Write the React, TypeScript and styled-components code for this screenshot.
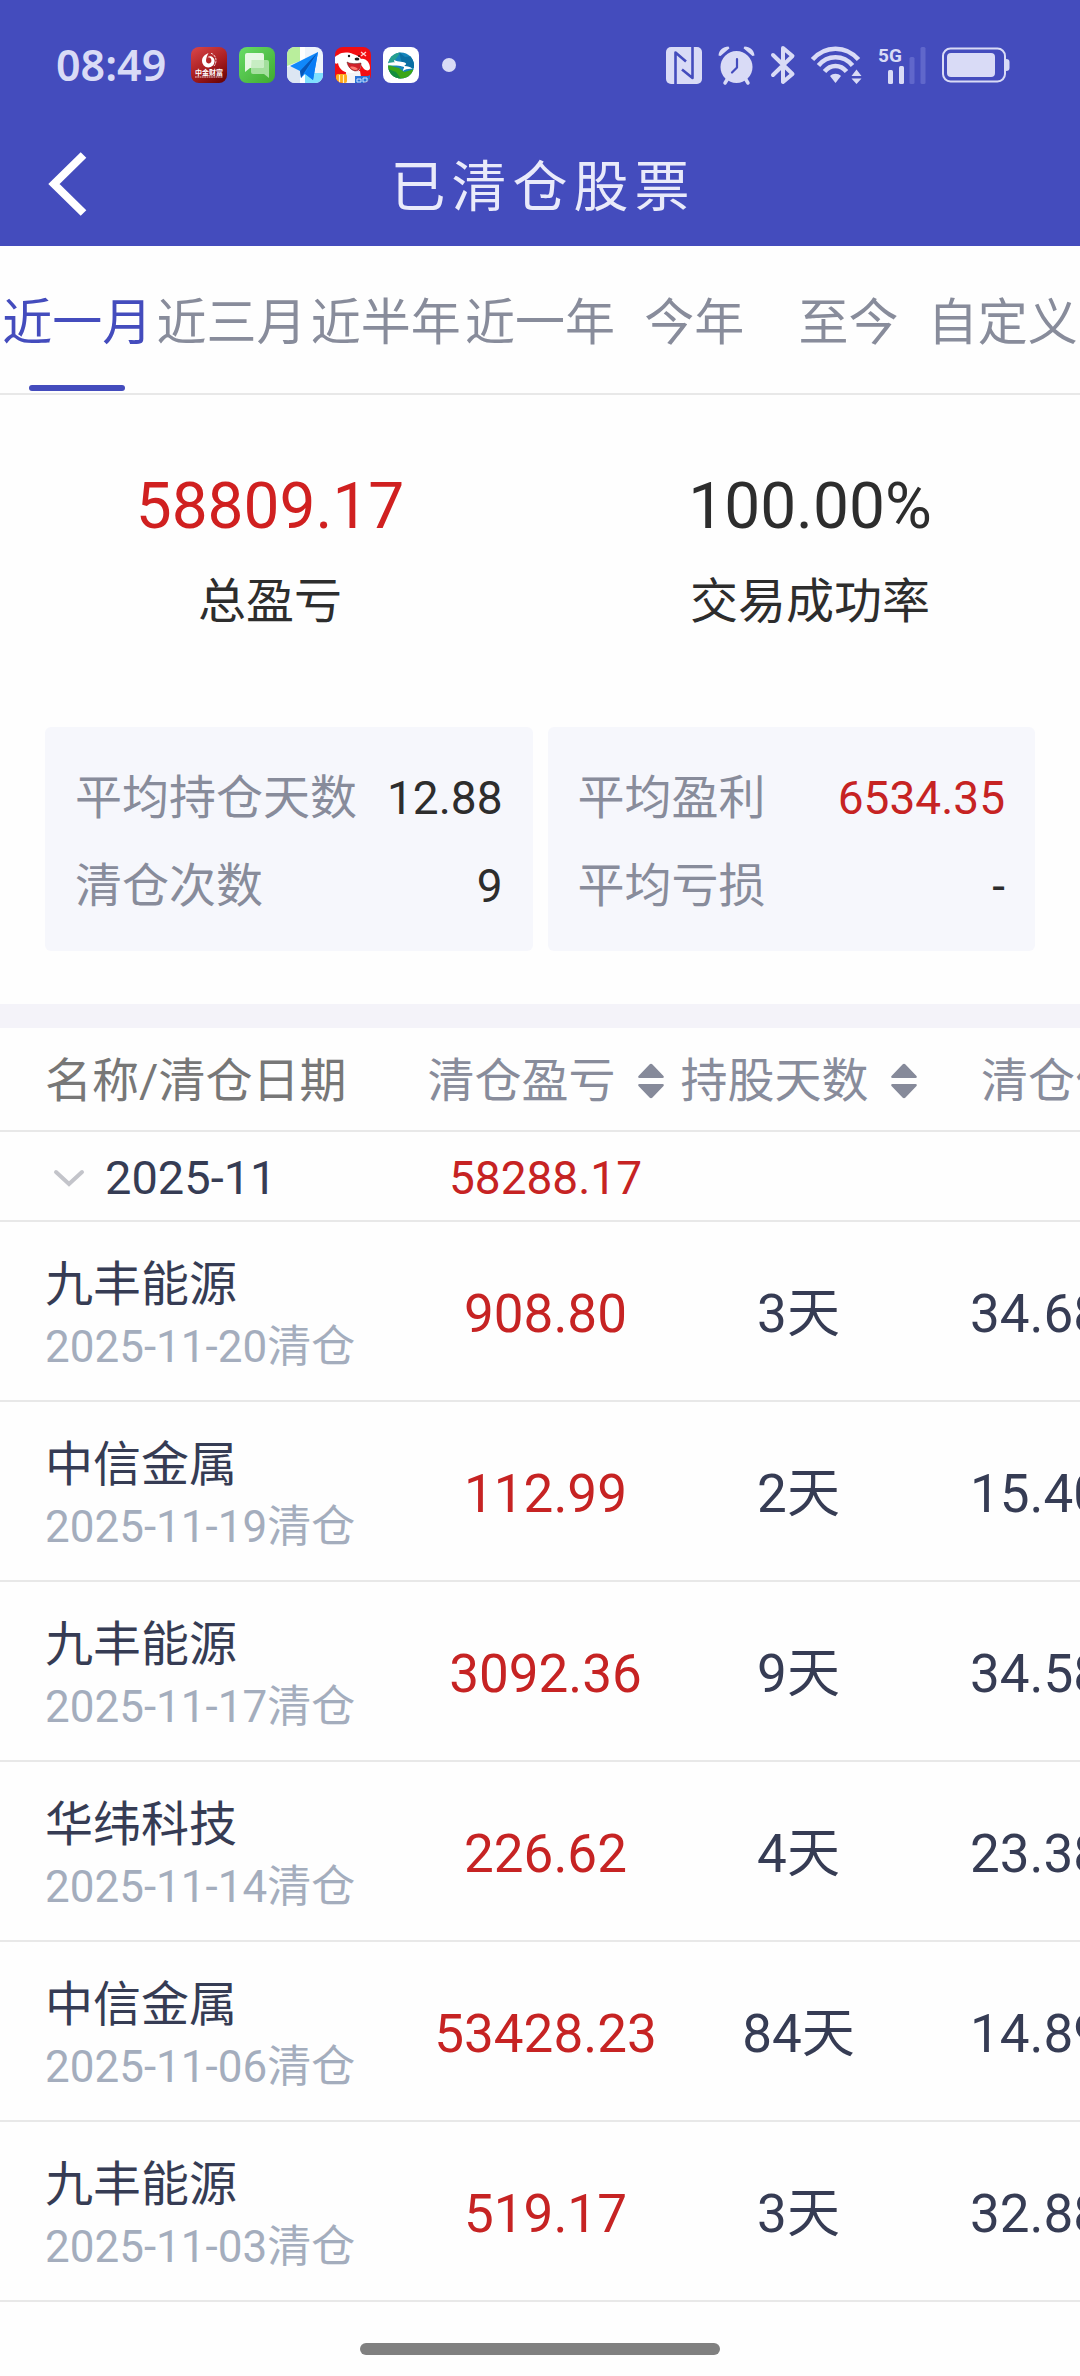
import React, { useState } from 'react';
import styled, { createGlobalStyle } from 'styled-components';

const color = {
  brand: '#444cbd',
  statusInk: '#d9dbf6',
  titleInk: '#e9eafa',
  muted: '#888c9b',
  heading: '#777777',
  ink: '#2d2d2d',
  navy: '#363c54',
  date: '#a4adbd',
  gain: '#c62323',
  gainBright: '#d02020',
  line: '#e8e8e8',
  card: '#f6f7fc',
  band: '#f4f3f9',
};

const GlobalStyle = createGlobalStyle`
  * { box-sizing: border-box; }
  html, body { margin: 0; background: #fefefe; }
  body, button {
    font-family: Roboto, "Noto Sans CJK SC", sans-serif;
    font-weight: 400;
  }
  button {
    margin: 0;
    padding: 0;
    border: 0;
    background: none;
    color: inherit;
    font-size: inherit;
    line-height: inherit;
    cursor: pointer;
  }
`;

const Page = styled.div`
  display: flex;
  flex-direction: column;
  min-height: 100vh;
`;

const TopArea = styled.header`
  background: ${color.brand};
`;

const StatusBar = styled.div`
  display: flex;
  align-items: center;
  justify-content: space-between;
  height: 122px;
  padding: 8px 70px 0 56px;
  color: ${color.statusInk};

  svg { overflow: visible; }
`;

const StatusGroup = styled.div<{ $gap: number }>`
  display: flex;
  align-items: center;
  gap: ${(p) => p.$gap}px;
`;

const Clock = styled.span`
  width: 123px;
  font-family: "Noto Sans", sans-serif;
  font-size: 43px;
  line-height: 44px;
  font-weight: 600;
`;

const Dot = styled.span`
  width: 14px;
  height: 14px;
  margin-left: 11px;
  border-radius: 50%;
  background: currentColor;
`;

const NavBar = styled.div`
  display: grid;
  grid-template-columns: 120px 1fr 120px;
  align-items: center;
  height: 124px;
`;

const BackButton = styled.button`
  display: flex;
  align-items: center;
  height: 100%;
  padding-left: 48px;
`;

const Title = styled.h1`
  margin: 0;
  padding: 6px 0 0 6px;
  color: ${color.titleInk};
  font-size: 55px;
  line-height: 72px;
  font-weight: 400;
  letter-spacing: 6px;
  text-align: center;
`;

const Tabs = styled.nav`
  display: flex;
  border-bottom: 2px solid ${color.line};
`;

const Tab = styled.button<{ $active: boolean }>`
  display: flex;
  flex: 1 1 0;
  flex-direction: column;
  align-items: center;
  gap: 32px;
  padding: 47px 0 2px;
  color: ${(p) => (p.$active ? color.brand : color.muted)};
  font-size: 50px;
  line-height: 60px;
  white-space: nowrap;

  &::after {
    content: "";
    width: 96px;
    height: 6px;
    border-radius: 3px;
    background: ${(p) => (p.$active ? color.brand : 'transparent')};
  }
`;

const Summary = styled.section`
  padding: 74px 45px 53px;
`;

const Totals = styled.div`
  display: grid;
  grid-template-columns: 1fr 1fr;
  margin: 0 -45px 91px;
`;

const Total = styled.div`
  display: flex;
  flex-direction: column;
  gap: 23px;
  align-items: center;
`;

const TotalValue = styled.strong<{ $gain?: boolean }>`
  color: ${(p) => (p.$gain ? color.gainBright : color.ink)};
  font-size: 64px;
  line-height: 76px;
  font-weight: 400;
`;

const TotalLabel = styled.span`
  color: ${color.ink};
  font-size: 48px;
  line-height: 68px;
`;

const Cards = styled.div`
  display: grid;
  grid-template-columns: 1fr 1fr;
  gap: 15px;
`;

const Card = styled.dl`
  margin: 0;
  padding: 27px 30px 21px;
  border-radius: 6px;
  background: ${color.card};
`;

const CardRow = styled.div`
  display: flex;
  justify-content: space-between;
  line-height: 88px;
  white-space: nowrap;
`;

const CardLabel = styled.dt`
  color: ${color.muted};
  font-size: 47px;
`;

const CardValue = styled.dd<{ $gain?: boolean }>`
  margin: 0;
  color: ${(p) => (p.$gain ? color.gain : color.ink)};
  font-size: 46px;
`;

const Band = styled.div`
  height: 24px;
  background: ${color.band};
`;

const TableScroller = styled.div`
  overflow-x: auto;
  scrollbar-width: none;
`;

const Table = styled.table`
  width: 1178px;
  min-width: 100%;
  table-layout: fixed;
  border-collapse: separate;
  border-spacing: 0;
  color: ${color.navy};

  th, td {
    padding: 3px 0 0;
    border-bottom: 2px solid ${color.line};
    font-weight: 400;
    text-align: center;
    white-space: nowrap;
  }
  th:first-child {
    padding-left: 45px;
    text-align: left;
  }
`;

const Col = styled.col<{ $width: number }>`
  width: ${(p) => p.$width}px;
`;

const HeadRow = styled.tr`
  height: 104px;
  color: ${color.muted};
  font-size: 47px;
  line-height: 68px;

  th:first-child { color: ${color.heading}; }
`;

const SortButton = styled.button`
  display: inline-flex;
  align-items: center;
  gap: 22px;
  vertical-align: top;
`;

const MonthRow = styled.tr`
  height: 90px;
  font-size: 47px;
  line-height: 60px;

  td { font-size: 46px; }
`;

const MonthToggle = styled.button`
  display: flex;
  align-items: center;
  gap: 20px;
  padding-left: 8px;
`;

const StockRow = styled.tr`
  height: 180px;
  font-size: 53px;
  line-height: 68px;

  td { padding-top: 6px; }
  th { padding-top: 10px; }
`;

const StockName = styled.div`
  font-size: 48px;
  line-height: 62px;
`;

const StockDate = styled.div`
  color: ${color.date};
  font-size: 44px;
  line-height: 62px;
`;

const GainCell = styled.td`
  color: ${color.gain};
`;

const HomeArea = styled.footer`
  display: flex;
  justify-content: center;
  padding: 41px 0 21px;
`;

const HomeBar = styled.div`
  width: 360px;
  height: 12px;
  border-radius: 6px;
  background: #808080;
`;

const TinyText = styled.text`
  font-family: Roboto, "Noto Sans CJK SC", sans-serif;
  font-weight: 700;
`;

const WealthIcon = () => (
  <svg width="36" height="36" viewBox="0 0 36 36" aria-hidden="true">
    <defs>
      <linearGradient id="wealth" x1="0.2" y1="0" x2="0.8" y2="1">
        <stop offset="0" stopColor="#d34144" />
        <stop offset="0.55" stopColor="#a81d20" />
        <stop offset="1" stopColor="#6c0507" />
      </linearGradient>
    </defs>
    <rect width="36" height="36" rx="8" fill="url(#wealth)" />
    <path d="M17.5 6c-4 1.600-6.500 4.200-6.500 8a6.300 6.300 0 0 0 12.600.3c0-3-2.300-5-4.600-5-1 0-1.800.3-2.400.9 2.600-.2 4 1.600 3.800 3.700-.2 1.700-1.500 2.700-3 2.500-1.800-.2-2.700-1.800-2.300-4 .4-2.300 1.400-4.400 2.400-6.400z" fill="#fff" />
    <path d="M20 6.300c3 .9 5 3.700 5 7.200 0 2.200-.7 4-2 5.500" fill="none" stroke="#fff" strokeWidth="0.800" strokeDasharray="2.500 0.800" />
    <TinyText x="18" y="28" fontSize="7" textAnchor="middle" fill="#fff">中金财富</TinyText>
    <path d="M4 30h28" stroke="#fff" strokeWidth="1" strokeDasharray="1.800 0.500" opacity="0.800" />
  </svg>
);

const MessageIcon = () => (
  <svg width="36" height="36" viewBox="0 0 36 36" aria-hidden="true">
    <defs>
      <linearGradient id="message" x1="0" y1="0" x2="1" y2="1">
        <stop offset="0" stopColor="#68dc66" />
        <stop offset="1" stopColor="#3faa30" />
      </linearGradient>
    </defs>
    <rect width="36" height="36" rx="8" fill="url(#message)" />
    <path d="M14 13h14a2 2 0 0 1 2 2v16l-5-4H14a2 2 0 0 1-2-2V15a2 2 0 0 1 2-2z" fill="#a3df9d" />
    <path d="M8 6h15a2 2 0 0 1 2 2v11a2 2 0 0 1-2 2H11l-5 4V8a2 2 0 0 1 2-2z" fill="#f1fbef" opacity="0.930" />
    <path d="M12.500 13H25v6a2 2 0 0 1-2 2H12z" fill="#c7edc3" />
  </svg>
);

const MapIcon = () => (
  <svg width="36" height="36" viewBox="0 0 36 36" aria-hidden="true">
    <defs>
      <clipPath id="mapClip"><rect width="36" height="36" rx="8" /></clipPath>
    </defs>
    <g clipPath="url(#mapClip)">
      <rect width="36" height="36" fill="#eef4fb" />
      <path d="M0 0h13v14L0 19z" fill="#b9ee9c" />
      <path d="M13 0h5v36h-5z" fill="#fff" />
      <path d="M18 26h18v10H18z" fill="#7fe0ff" />
      <path d="M0 20h13v16H0z" fill="#dce6f3" />
      <path d="M3 19L31 5 26 33l-8-6-4 4-1-7z" fill="#1088fb" />
      <path d="M31 5L13 24l1 7 3-5z" fill="#0756b8" />
      <path d="M31 5L18 26.500 26 33z" fill="#0a7cf5" />
    </g>
  </svg>
);

const DogIcon = () => (
  <svg width="36" height="36" viewBox="0 0 36 36" aria-hidden="true">
    <defs>
      <clipPath id="dogClip"><rect width="36" height="36" rx="8" /></clipPath>
    </defs>
    <g clipPath="url(#dogClip)">
      <rect width="36" height="36" fill="#f20d12" />
      <path d="M11 25l14-1 2 12H10z" fill="#f4f4f6" />
      <path d="M3 8c4-3 10-3 15-1 4 1 7 3 8 5 5-1 9 4 9 9 0 3-4 3-6 1-1-1-2-3-3-4 0 5-4 8-9 8-7 0-13-3-14-10-1 1-3 1-4-1-1-3 1-6 4-7z" fill="#fff" />
      <path d="M12 15c3 2 9 2 14 1 0 5-2 8-6 8-4-1-7-4-8-9z" fill="#d0202a" stroke="#5a1a1a" strokeWidth="0.500" />
      <path d="M15 20c3-1 6 0 8 2-2 2-6 1-8-2z" fill="#ff7b72" />
      <ellipse cx="22" cy="12" rx="2.400" ry="1.500" fill="#1c1c1e" />
      <circle cx="14" cy="9" r="1.200" fill="#1c1c1e" />
      <circle cx="24" cy="9" r="0.900" fill="#1c1c1e" />
      <path d="M26 5l5 4m0-4l-5 4" stroke="#ffd3d0" strokeWidth="1.300" />
      <rect x="1" y="27" width="11" height="9" rx="2" fill="#ffac1c" />
      <path d="M4.500 28v8M8.500 28v8" stroke="#fff0c4" strokeWidth="1.200" />
      <path d="M20 29h13l2-1v8H20z" fill="#2873d8" />
      <path d="M22 32h4v3h-4zM28 31h4v4h-4z" fill="none" stroke="#cfe3ff" strokeWidth="1" />
    </g>
  </svg>
);

const RiverIcon = () => (
  <svg width="36" height="36" viewBox="0 0 36 36" aria-hidden="true">
    <defs>
      <clipPath id="riverClip"><circle cx="18" cy="18.500" r="13" /></clipPath>
    </defs>
    <rect width="36" height="36" rx="8" fill="#fff" />
    <g clipPath="url(#riverClip)">
      <rect width="36" height="36" fill="#1585ba" />
      <path d="M5 5h13l-6 8 4 6H4z" fill="#27a08f" />
      <path d="M16 5l6 5 9-1v12H20z" fill="#0b6fa3" />
      <path d="M4 18l12 3 5 4 11-3v12H4z" fill="#3aa617" />
      <path d="M5 22l8 3 5 7H8z" fill="#138d3e" />
      <path d="M4 16c4 0 7-1 9-.5-2-.8-2.500-1.500-1.500-2.500 3 2.500 10 1 11.500 3.500.8 1.500-2 1.700-1.500 2.500 3 .5 6 .5 8 3-4-.5-7 .3-9.500 2-.5-2 2-2.800.5-4.200C17 18 11 19 4 18z" fill="#fff" />
    </g>
  </svg>
);

const NfcIcon = () => (
  <svg width="36" height="37" viewBox="0 0 36 37" aria-hidden="true">
    <rect width="36" height="37" rx="5" fill="currentColor" />
    <path d="M9.500 37V5.500L20 14.500M26.500 0v31L16 22.500" fill="none" stroke={color.brand} strokeWidth="2.600" strokeLinejoin="round" />
  </svg>
);

const AlarmIcon = () => (
  <svg width="37" height="38" viewBox="0 0 37 38" aria-hidden="true">
    <circle cx="18.500" cy="21" r="16" fill="currentColor" />
    <path d="M0.500 9.500C1 4 5 .5 10.500 .5l1 1.700L2.500 10zM36.500 9.500C36 4 32 .5 26.500 .5l-1 1.700 9 7.800z" fill="currentColor" />
    <path d="M9.500 33L7 37M27.500 33l2.500 4" stroke="currentColor" strokeWidth="3.500" strokeLinecap="round" />
    <path d="M19 13v8.500l-5 5" fill="none" stroke={color.brand} strokeWidth="2.200" strokeLinecap="round" strokeLinejoin="round" />
  </svg>
);

const BluetoothIcon = () => (
  <svg width="24" height="38" viewBox="0 0 24 38" aria-hidden="true">
    <path d="M2 9l19.500 19L12 36V2l9.500 8L2 29" fill="none" stroke="currentColor" strokeWidth="4" strokeLinecap="round" strokeLinejoin="round" />
  </svg>
);

const WifiIcon = () => (
  <svg width="51" height="38" viewBox="0 0 51 38" aria-hidden="true">
    <g fill="none" stroke="currentColor" strokeWidth="4.500">
      <path d="M1.500 13.500C14-1 35-1 47.500 13.500" />
      <path d="M7.500 19.500C16.500 8.500 32.500 8.500 41.500 19.500" />
      <path d="M13.500 25.500C19.500 18 29.500 18 35.500 25.500" />
    </g>
    <path d="M19 30c3-3 8-3 11 0l-5.500 7z" fill="currentColor" />
    <path d="M45.500 23.500l5 6.500h-10zM45.500 38l5-5.500h-10z" fill="currentColor" />
  </svg>
);

const SignalIcon = () => (
  <svg width="48" height="37" viewBox="0 0 48 37" aria-hidden="true">
    <TinyText x="0" y="15" fontSize="19" fill="currentColor">5G</TinyText>
    <rect x="10" y="23" width="5" height="14" rx="1.500" fill="currentColor" />
    <rect x="21" y="19" width="5" height="18" rx="1.500" fill="currentColor" />
    <rect x="31.500" y="10" width="5" height="27" rx="1.500" fill="#6067cb" />
    <rect x="42.500" y="0" width="5" height="37" rx="1.500" fill="#6067cb" />
  </svg>
);

const BatteryIcon = () => (
  <svg width="68" height="36" viewBox="0 0 68 36" aria-hidden="true">
    <rect x="1" y="1.500" width="62" height="33" rx="7.500" fill="none" stroke="currentColor" strokeWidth="2" />
    <rect x="5" y="6" width="48" height="24" rx="4" fill="currentColor" />
    <path d="M64 12c2.500 0 3.500 1 3.500 3v6c0 2-1 3-3.500 3z" fill="currentColor" />
  </svg>
);

const BackIcon = () => (
  <svg width="40" height="64" viewBox="0 0 40 64" aria-hidden="true">
    <path d="M35.500 3L6 32l29.500 29" fill="none" stroke="#fff" strokeWidth="8" />
  </svg>
);

const SortIcon = () => (
  <svg width="26" height="36" viewBox="0 0 26 36" aria-hidden="true">
    <path d="M11.500 1.600q1.500-1.500 3 0L25.500 13q1 2-1 2h-23q-2 0-1-2zM11.500 34.400q1.500 1.500 3 0L25.500 23q1-2-1-2h-23q-2 0-1 2z" fill="#868a9a" />
  </svg>
);

const ChevronIcon = () => (
  <svg width="32" height="18" viewBox="0 0 32 18" aria-hidden="true">
    <path d="M3 3l13 12L29 3" fill="none" stroke="#c3c4ca" strokeWidth="4" strokeLinecap="round" />
  </svg>
);

const ranges = ['近一月', '近三月', '近半年', '近一年', '今年', '至今', '自定义'];

const trades = [
  { name: '九丰能源', date: '2025-11-20', profit: '908.80', days: 3, price: '34.680' },
  { name: '中信金属', date: '2025-11-19', profit: '112.99', days: 2, price: '15.400' },
  { name: '九丰能源', date: '2025-11-17', profit: '3092.36', days: 9, price: '34.580' },
  { name: '华纬科技', date: '2025-11-14', profit: '226.62', days: 4, price: '23.380' },
  { name: '中信金属', date: '2025-11-06', profit: '53428.23', days: 84, price: '14.890' },
  { name: '九丰能源', date: '2025-11-03', profit: '519.17', days: 3, price: '32.880' },
];

export default function App() {
  const [range, setRange] = useState(ranges[0]);
  const [open, setOpen] = useState(true);

  return (
    <Page>
      <GlobalStyle />
      <TopArea>
        <StatusBar>
          <StatusGroup $gap={12}>
            <Clock>08:49</Clock>
            <WealthIcon />
            <MessageIcon />
            <MapIcon />
            <DogIcon />
            <RiverIcon />
            <Dot />
          </StatusGroup>
          <StatusGroup $gap={16}>
            <NfcIcon />
            <AlarmIcon />
            <BluetoothIcon />
            <WifiIcon />
            <SignalIcon />
            <BatteryIcon />
          </StatusGroup>
        </StatusBar>
        <NavBar>
          <BackButton aria-label="返回"><BackIcon /></BackButton>
          <Title>已清仓股票</Title>
        </NavBar>
      </TopArea>

      <Tabs>
        {ranges.map((r) => (
          <Tab key={r} $active={r === range} onClick={() => setRange(r)}>{r}</Tab>
        ))}
      </Tabs>

      <Summary>
        <Totals>
          <Total>
            <TotalValue $gain>58809.17</TotalValue>
            <TotalLabel>总盈亏</TotalLabel>
          </Total>
          <Total>
            <TotalValue>100.00%</TotalValue>
            <TotalLabel>交易成功率</TotalLabel>
          </Total>
        </Totals>
        <Cards>
          <Card>
            <CardRow><CardLabel>平均持仓天数</CardLabel><CardValue>12.88</CardValue></CardRow>
            <CardRow><CardLabel>清仓次数</CardLabel><CardValue>9</CardValue></CardRow>
          </Card>
          <Card>
            <CardRow><CardLabel>平均盈利</CardLabel><CardValue $gain>6534.35</CardValue></CardRow>
            <CardRow><CardLabel>平均亏损</CardLabel><CardValue>-</CardValue></CardRow>
          </Card>
        </Cards>
      </Summary>

      <Band />

      <TableScroller>
        <Table>
          <colgroup>
            <Col $width={419} />
            <Col $width={253} />
            <Col $width={253} />
            <Col $width={253} />
          </colgroup>
          <thead>
            <HeadRow>
              <th scope="col">名称/清仓日期</th>
              <th scope="col"><SortButton>清仓盈亏<SortIcon /></SortButton></th>
              <th scope="col"><SortButton>持股天数<SortIcon /></SortButton></th>
              <th scope="col">清仓价</th>
            </HeadRow>
          </thead>
          <tbody>
            <MonthRow>
              <th scope="row">
                <MonthToggle aria-expanded={open} onClick={() => setOpen(!open)}>
                  <ChevronIcon />
                  2025-11
                </MonthToggle>
              </th>
              <GainCell>58288.17</GainCell>
              <td />
              <td />
            </MonthRow>
            {open && trades.map((t) => (
              <StockRow key={t.date}>
                <th scope="row">
                  <StockName>{t.name}</StockName>
                  <StockDate>{t.date}清仓</StockDate>
                </th>
                <GainCell>{t.profit}</GainCell>
                <td>{t.days}天</td>
                <td>{t.price}</td>
              </StockRow>
            ))}
          </tbody>
        </Table>
      </TableScroller>

      <HomeArea><HomeBar /></HomeArea>
    </Page>
  );
}
